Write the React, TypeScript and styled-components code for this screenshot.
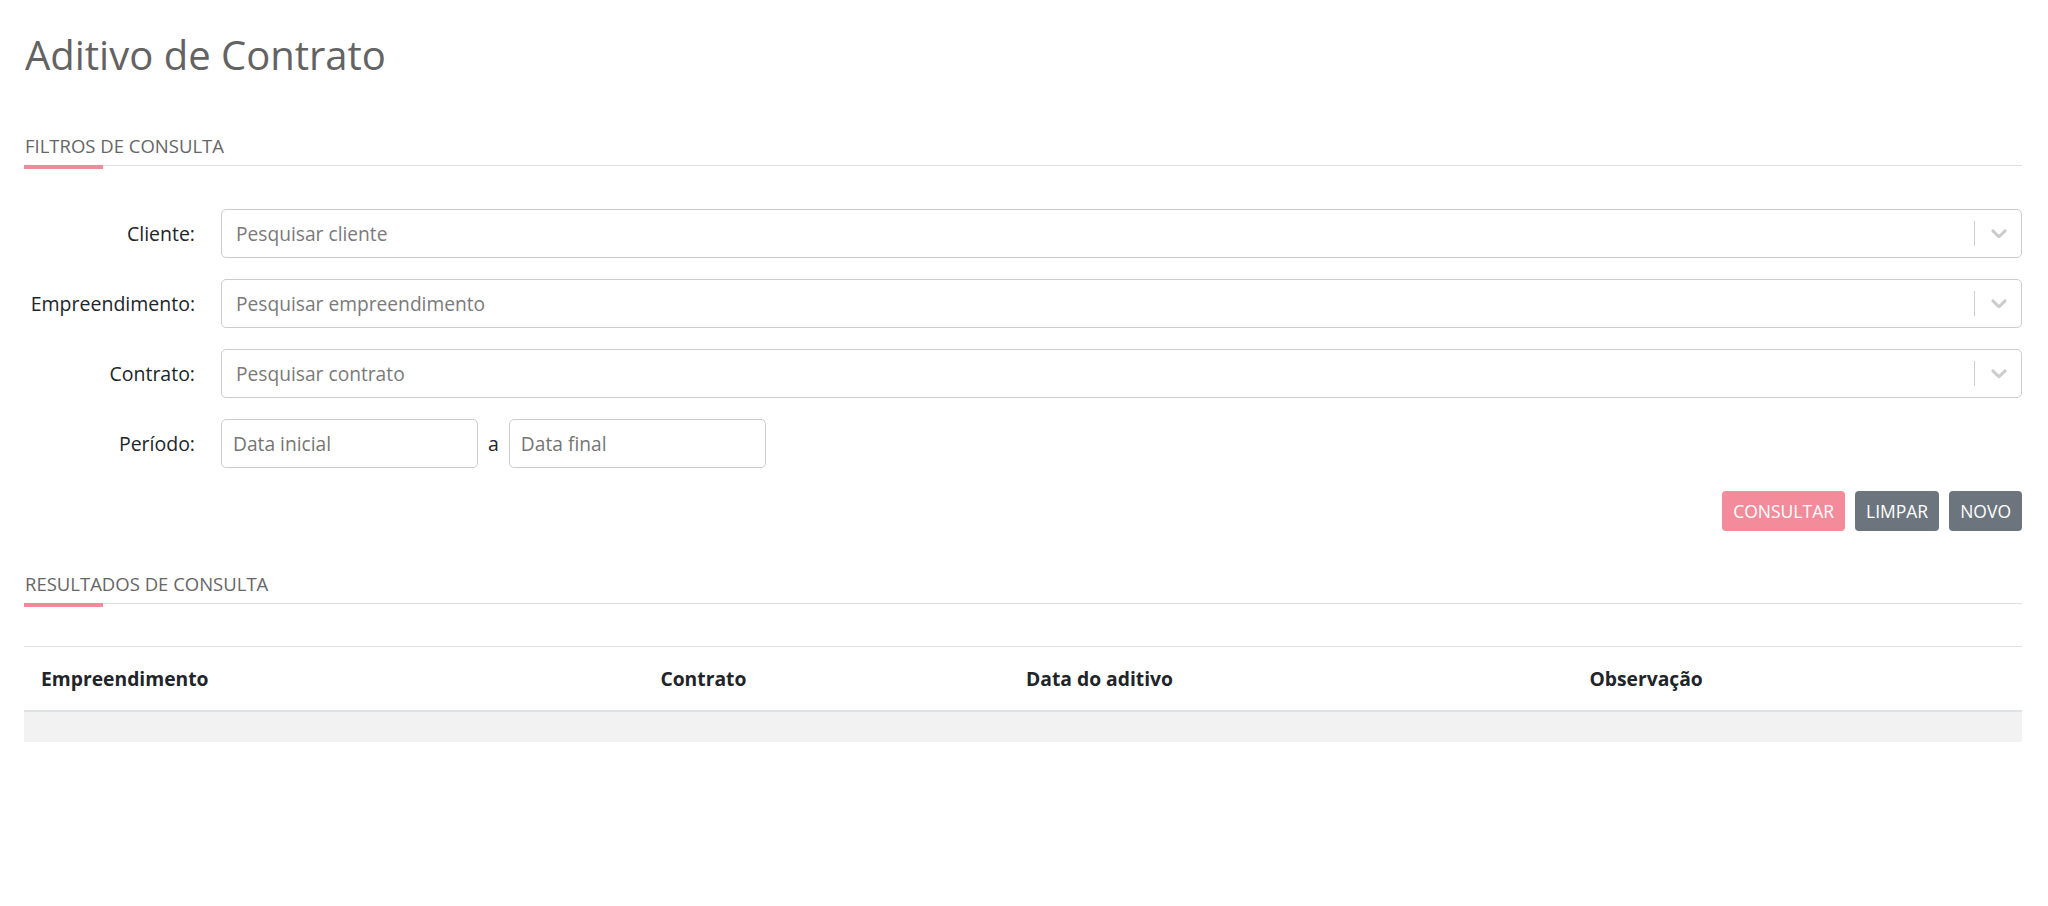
import React from 'react';
import styled, { createGlobalStyle } from 'styled-components';

const GlobalStyle = createGlobalStyle`
    * {
        box-sizing: border-box;
    }
    body {
        margin: 0;
        background: #ffffff;
        font-family: 'Open Sans', 'Noto Sans', 'Liberation Sans', sans-serif;
        color: #212529;
    }
`;

const Page = styled.main`
    padding: 0 26px 40px 24px;
`;

const Title = styled.h1`
    margin: 31px 0 0 1px;
    font-size: 40px;
    font-weight: 400;
    line-height: 1.2;
    color: #636363;
`;

const SectionTitle = styled.h2<{ $spaceTop: number }>`
    position: relative;
    margin: ${(p) => p.$spaceTop}px 0 0;
    padding: 0 0 5px 1px;
    font-size: 18.5px;
    font-weight: 400;
    line-height: 1.5;
    text-transform: uppercase;
    color: #666666;
    border-bottom: 1px solid #dedede;

    &::after {
        content: '';
        position: absolute;
        left: 0;
        top: 100%;
        width: 79px;
        height: 4px;
        background: #f38a99;
    }
`;

const Form = styled.form`
    display: grid;
    grid-template-columns: 171px 1fr;
    column-gap: 26px;
    row-gap: 21px;
    margin-top: 43px;
`;

const Label = styled.label`
    display: flex;
    align-items: center;
    justify-content: flex-end;
    height: 49px;
    font-size: 19.5px;
    color: #212529;
`;

const SelectBox = styled.div`
    display: flex;
    align-items: center;
    height: 49px;
    border: 1px solid #cccccc;
    border-radius: 5px;
    background: #ffffff;
`;

const SelectPlaceholder = styled.span`
    flex: 1;
    padding-left: 14px;
    font-size: 19.2px;
    color: #7a7a7a;
`;

const Separator = styled.span`
    align-self: stretch;
    width: 1px;
    margin: 11px 0;
    background: #cccccc;
`;

const Indicator = styled.span`
    display: flex;
    padding: 0 9px 0 11px;
    color: #cccccc;
`;

const PeriodRow = styled.div`
    display: flex;
    align-items: center;
    gap: 10px;
`;

const DateInput = styled.input`
    width: 257px;
    height: 49px;
    padding: 0 11px;
    border: 1px solid #cccccc;
    border-radius: 5px;
    font-family: inherit;
    font-size: 19.2px;
    color: #212529;
    outline: none;

    &::placeholder {
        color: #757575;
    }
`;

const Separ = styled.span`
    font-size: 19.5px;
    color: #212529;
`;

const Actions = styled.div`
    display: flex;
    justify-content: flex-end;
    gap: 10px;
    margin-top: 23px;
`;

const Button = styled.button<{ $variant: 'primary' | 'secondary' }>`
    height: 40px;
    padding: 0 11px;
    border: none;
    border-radius: 4px;
    font-family: inherit;
    font-size: 17.5px;
    text-transform: uppercase;
    color: #ffffff;
    background: ${(p) => (p.$variant === 'primary' ? '#f48b9a' : '#6c757d')};
    cursor: pointer;
`;

const Table = styled.table`
    width: 100%;
    margin-top: 42px;
    border-collapse: collapse;
    border-top: 1px solid #dee2e6;
`;

const HeadCell = styled.th<{ $width: string }>`
    width: ${(p) => p.$width};
    height: 65px;
    padding: 0 17px;
    text-align: left;
    font-size: 19.3px;
    font-weight: 700;
    color: #212529;
    border-bottom: 2px solid #dee2e6;
`;

const EmptyCell = styled.td`
    height: 31px;
    padding: 0;
    background: #f2f2f2;
`;

function Chevron() {
    return (
        <svg width='26' height='26' viewBox='0 0 20 20' fill='currentColor' aria-hidden='true'>
            <path d='M4.516 7.548c0.436-0.446 1.043-0.481 1.576 0l3.908 3.747 3.908-3.747c0.533-0.481 1.141-0.446 1.574 0 0.436 0.445 0.408 1.197 0 1.615-0.406 0.418-4.695 4.502-4.695 4.502-0.217 0.223-0.502 0.335-0.787 0.335s-0.57-0.112-0.789-0.335c0 0-4.287-4.084-4.695-4.502s-0.436-1.17 0-1.615z' />
        </svg>
    );
}

function SearchSelect({ placeholder }: { placeholder: string }) {
    return (
        <SelectBox>
            <SelectPlaceholder>{placeholder}</SelectPlaceholder>
            <Separator />
            <Indicator>
                <Chevron />
            </Indicator>
        </SelectBox>
    );
}

const columns = [
    { title: 'Empreendimento', width: '31%' },
    { title: 'Contrato', width: '18.3%' },
    { title: 'Data do aditivo', width: '28.2%' },
    { title: 'Observação', width: '22.5%' },
];

export default function App() {
    return (
        <>
            <GlobalStyle />
            <Page>
                <Title>Aditivo de Contrato</Title>

                <SectionTitle $spaceTop={53}>Filtros de consulta</SectionTitle>
                <Form onSubmit={(e) => e.preventDefault()}>
                    <Label>Cliente:</Label>
                    <SearchSelect placeholder='Pesquisar cliente' />

                    <Label>Empreendimento:</Label>
                    <SearchSelect placeholder='Pesquisar empreendimento' />

                    <Label>Contrato:</Label>
                    <SearchSelect placeholder='Pesquisar contrato' />

                    <Label>Período:</Label>
                    <PeriodRow>
                        <DateInput placeholder='Data inicial' />
                        <Separ>a</Separ>
                        <DateInput placeholder='Data final' />
                    </PeriodRow>
                </Form>

                <Actions>
                    <Button $variant='primary'>Consultar</Button>
                    <Button $variant='secondary'>Limpar</Button>
                    <Button $variant='secondary'>Novo</Button>
                </Actions>

                <SectionTitle $spaceTop={39}>Resultados de consulta</SectionTitle>
                <Table>
                    <thead>
                        <tr>
                            {columns.map((c) => (
                                <HeadCell key={c.title} $width={c.width}>
                                    {c.title}
                                </HeadCell>
                            ))}
                        </tr>
                    </thead>
                    <tbody>
                        <tr>
                            <EmptyCell colSpan={4} />
                        </tr>
                    </tbody>
                </Table>
            </Page>
        </>
    );
}
